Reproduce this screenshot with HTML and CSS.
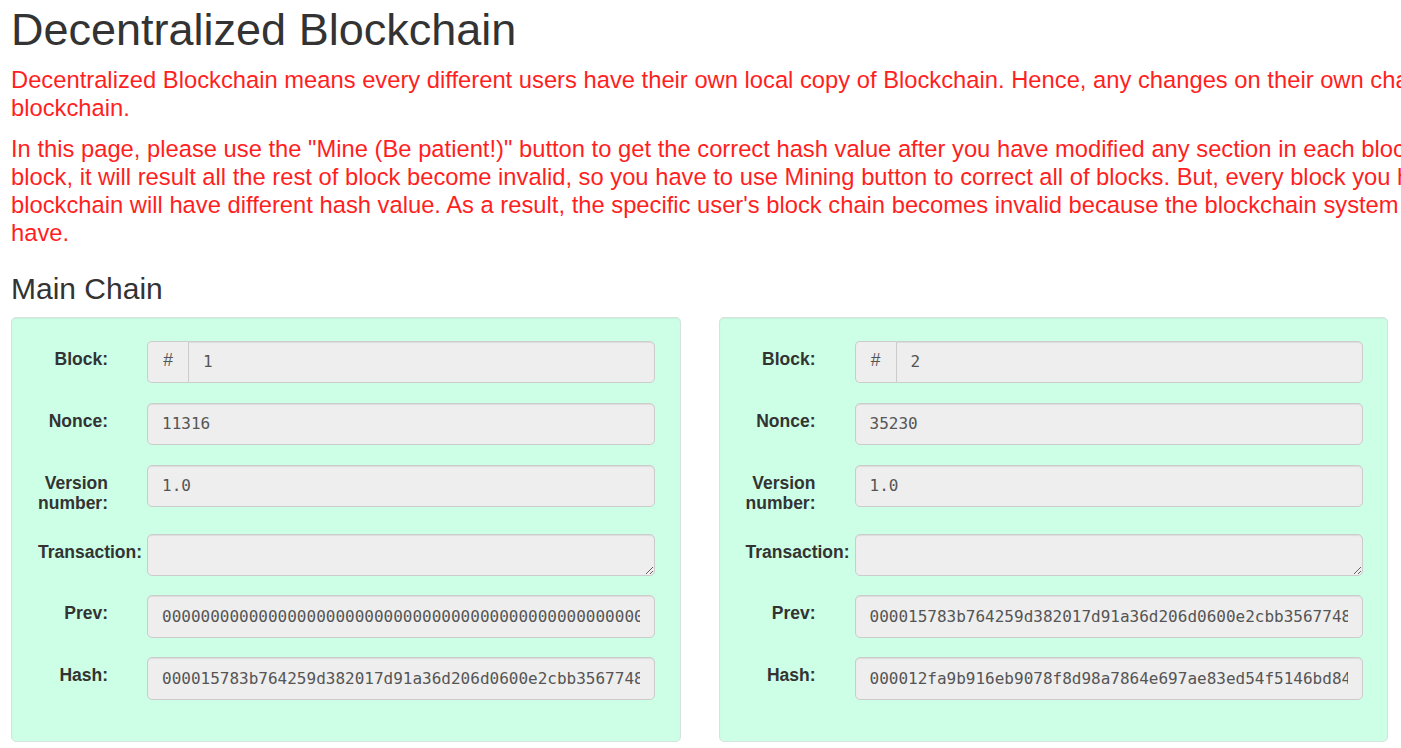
FILE: index.html
```html
<!DOCTYPE html>
<html lang="en">
<head>
<meta charset="utf-8">
<title>Decentralized Blockchain</title>
<link rel="stylesheet" href="styles.css">
</head>
<body>
<div class="page">
  <h1 class="title">Decentralized Blockchain</h1>
  <div class="intro">
    <p>Decentralized Blockchain means every different users have their own local copy of Blockchain. Hence, any changes on their own chain won't affect the others'<br>blockchain.</p>
    <p>In this page, please use the "Mine (Be patient!)" button to get the correct hash value after you have modified any section in each block. If you modify one<br>block, it will result all the rest of block become invalid, so you have to use Mining button to correct all of blocks. But, every block you have mined in your<br>blockchain will have different hash value. As a result, the specific user's block chain becomes invalid because the blockchain system compares what other users<br>have.</p>
  </div>
  <h3 class="section-title">Main Chain</h3>
  <div class="chain">
    <div class="block-card">
      <div class="form-row">
        <label class="row-label">Block:</label>
        <div class="input-group">
          <span class="addon">#</span>
          <input class="field field-grouped" type="text" value="1" readonly>
        </div>
      </div>
      <div class="form-row">
        <label class="row-label">Nonce:</label>
        <input class="field" type="text" value="11316" readonly>
      </div>
      <div class="form-row">
        <label class="row-label">Version number:</label>
        <input class="field" type="text" value="1.0" readonly>
      </div>
      <div class="form-row">
        <label class="row-label">Transaction:</label>
        <textarea class="field field-area" rows="1" readonly></textarea>
      </div>
      <div class="form-row">
        <label class="row-label">Prev:</label>
        <input class="field" type="text" value="0000000000000000000000000000000000000000000000000000000000000000" readonly>
      </div>
      <div class="form-row">
        <label class="row-label">Hash:</label>
        <input class="field" type="text" value="000015783b764259d382017d91a36d206d0600e2cbb35677480c1e2f9a3b5d7e" readonly>
      </div>
    </div>
    <div class="block-card">
      <div class="form-row">
        <label class="row-label">Block:</label>
        <div class="input-group">
          <span class="addon">#</span>
          <input class="field field-grouped" type="text" value="2" readonly>
        </div>
      </div>
      <div class="form-row">
        <label class="row-label">Nonce:</label>
        <input class="field" type="text" value="35230" readonly>
      </div>
      <div class="form-row">
        <label class="row-label">Version number:</label>
        <input class="field" type="text" value="1.0" readonly>
      </div>
      <div class="form-row">
        <label class="row-label">Transaction:</label>
        <textarea class="field field-area" rows="1" readonly></textarea>
      </div>
      <div class="form-row">
        <label class="row-label">Prev:</label>
        <input class="field" type="text" value="000015783b764259d382017d91a36d206d0600e2cbb35677480c1e2f9a3b5d7e" readonly>
      </div>
      <div class="form-row">
        <label class="row-label">Hash:</label>
        <input class="field" type="text" value="000012fa9b916eb9078f8d98a7864e697ae83ed54f5146bd84a1c3e5f7092b4d" readonly>
      </div>
    </div>
  </div>
</div>
</body>
</html>
```
FILE: styles.css
```css
html, body {
  margin: 0;
  padding: 0;
}

body {
  font-family: "Liberation Sans", Arial, sans-serif;
  color: #333;
  background: #fff;
  overflow: hidden;
}

.page {
  padding-left: 11px;
}

.title {
  font-size: 45px;
  line-height: 49.5px;
  font-weight: normal;
  margin: 4.7px 0 11.5px;
  color: #333;
}

.intro p {
  width: 2400px;
  font-size: 23.75px;
  line-height: 28px;
  color: #ff1f1f;
  margin: 0 0 13px;
}

.section-title {
  font-size: 30px;
  line-height: 33px;
  font-weight: normal;
  margin: 25px 0 11.9px;
  color: #333;
}

.chain {
  display: grid;
  grid-template-columns: 669.5px 669.5px;
  column-gap: 38px;
}

.block-card {
  background: #ccffe6;
  border: 1px solid #d6e3dc;
  border-radius: 5px;
  box-shadow: inset 0 1px 1px rgba(0, 0, 0, 0.05);
  padding: 23px 24.5px 22px 26px;
}

.form-row {
  display: grid;
  grid-template-columns: 70px 1fr;
  column-gap: 39px;
  align-items: start;
  margin-bottom: 19.5px;
}

.row-label {
  text-align: right;
  font-weight: bold;
  font-size: 17.5px;
  line-height: 20px;
  padding: 8.3px 0 1.2px;
  color: #333;
}

.field {
  box-sizing: border-box;
  width: 100%;
  height: 42.5px;
  margin: 0;
  border: 1px solid #ccc;
  border-radius: 5px;
  background: #eee;
  box-shadow: inset 0 1px 1px rgba(0, 0, 0, 0.075);
  padding: 0 14px;
  font-family: "DejaVu Sans Mono", "Liberation Mono", monospace;
  font-size: 16px;
  color: #555;
  outline: none;
}

.field-area {
  display: block;
  height: 42px;
  padding: 9px 14px;
  resize: vertical;
}

.input-group {
  display: flex;
}

.addon {
  box-sizing: border-box;
  width: 41px;
  height: 42.5px;
  border: 1px solid #ccc;
  border-right: 0;
  border-radius: 5px 0 0 5px;
  background: #eee;
  color: #555;
  font-size: 17.5px;
  display: flex;
  align-items: center;
  justify-content: center;
  padding-bottom: 3px;
}

.field-grouped {
  flex: 1;
  border-radius: 0 5px 5px 0;
}
```
